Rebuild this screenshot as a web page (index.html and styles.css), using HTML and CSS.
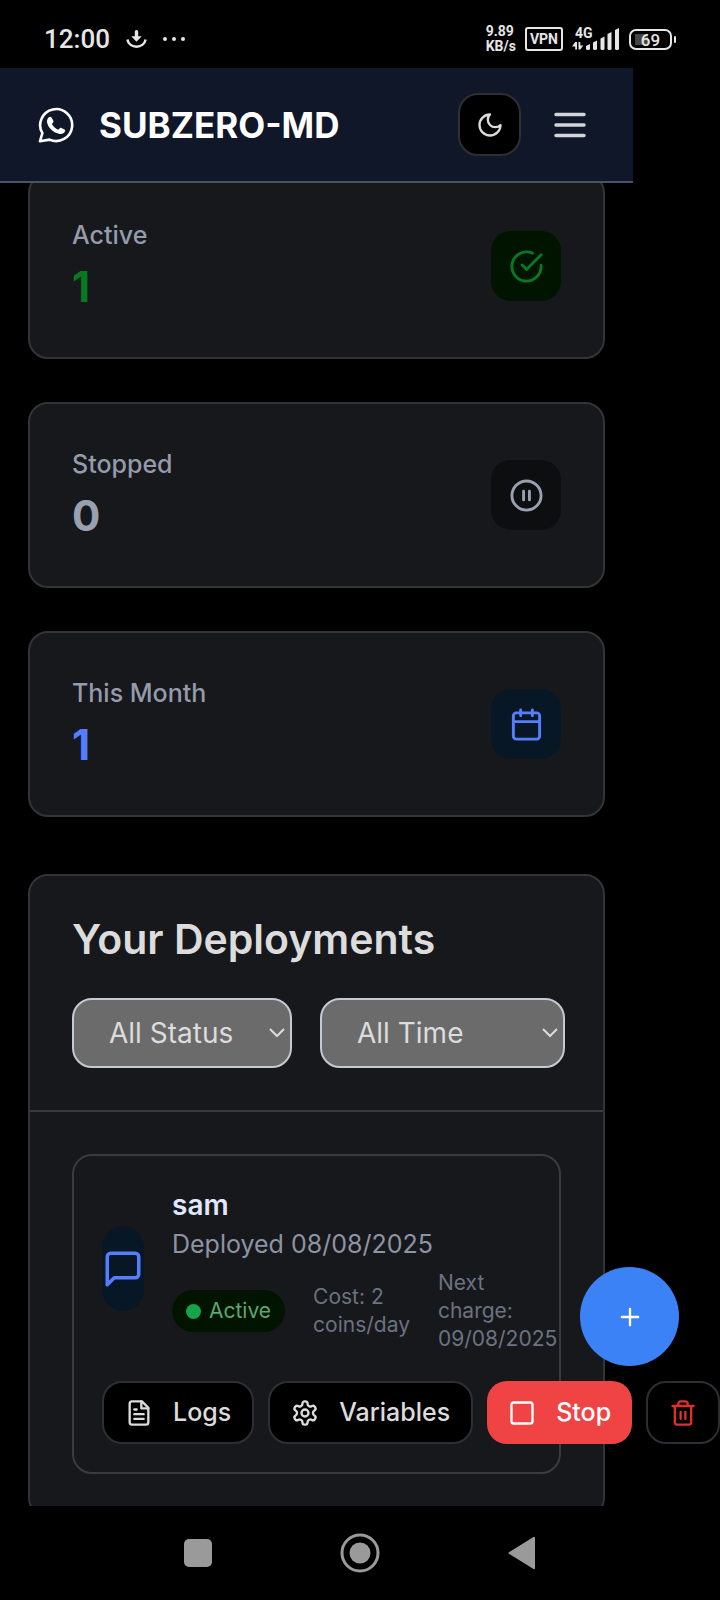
FILE: index.html
```html
<!DOCTYPE html>
<html lang="en">
<head>
<meta charset="utf-8">
<meta name="viewport" content="width=device-width, initial-scale=1">
<title>SUBZERO-MD</title>
<link rel="stylesheet" href="styles.css">
</head>
<body>
<div class="screen">
  <div class="status-bar">
    <div class="status-left">
      <span class="clock">12:00</span>
      <svg class="download" viewBox="0 0 22 20" aria-hidden="true"><path d="M9.200 2.500a1.800 1.800 0 0 1 3.600 0V7h3.700L11 13 5.500 7h3.700z" fill="currentColor"/><path d="M1.500 10.500c1.500 10 17.500 10 19 0" fill="none" stroke="currentColor" stroke-width="2.600"/></svg>
      <svg class="dots" viewBox="0 0 22 6" fill="currentColor" aria-hidden="true"><circle cx="2" cy="3" r="2"/><circle cx="11" cy="3" r="2"/><circle cx="20" cy="3" r="2"/></svg>
    </div>
    <div class="status-right">
      <span class="net-speed">9.89<br>KB/s</span>
      <span class="vpn">VPN</span>
      <span class="signal">
        <span class="signal-label">4G</span>
        <svg class="signal-bars" viewBox="0 0 48 24" fill="currentColor" aria-hidden="true"><path d="M0 19.500 3.200 15H5v7.500H3.200v-3zM6.500 15h1.800v3.500h3L8.300 22.500H6.500z"/><path d="M14 19l4-2v4.500q0 1.500-1.500 1.500h-1q-1.500 0-1.500-1.500z"/><path d="M21 15.500l4-2v8q0 1.500-1.500 1.500h-1q-1.500 0-1.500-1.500z"/><path d="M28.500 11.500l4-2v12q0 1.500-1.500 1.500h-1q-1.500 0-1.500-1.500z"/><path d="M35.500 7l4-2v16.500q0 1.500-1.500 1.500h-1q-1.500 0-1.500-1.500z"/><path d="M43 3l4-2v20.500q0 1.500-1.500 1.500h-1q-1.500 0-1.500-1.500z"/></svg>
      </span>
      <span class="battery"><span class="battery-level">69</span></span>
    </div>
  </div>

  <header class="app-header">
    <a class="brand" href="#">
      <svg class="brand-icon" viewBox="0 0 36 36" aria-hidden="true"><path d="M2 34.200 4.400 26.200A16 16 0 1 1 11.500 32.600Z" fill="none" stroke="currentColor" stroke-width="2.600" stroke-linejoin="round"/><path d="M10.300 10.800c1-1.200 2.600-1.300 3.300-.2l1.700 3.200c.4.800.2 1.400-.4 2l-1 1.100c1.600 2.800 3.600 4.600 6.400 5.800l1.500-1.500c.5-.5 1-.5 1.600-.3l3 1.500c.8.400.9 1 .6 1.800-.8 2-3 3-5.200 2.700-6.600-1-11.500-6-12.700-11.400-.4-1.800.2-3.500 1.200-4.700z" fill="currentColor"/></svg>
      <span>SUBZERO-MD</span>
    </a>
    <div class="header-actions">
      <button class="btn btn-icon" type="button" aria-label="Toggle theme">
        <svg class="icon" viewBox="0 0 24 24"><path d="M12 3a6 6 0 0 0 9 9 9 9 0 1 1-9-9Z"/></svg>
      </button>
      <button class="menu-button" type="button" aria-label="Open menu">
        <svg class="icon icon-lg" viewBox="0 0 24 24"><path d="M4 6h16M4 12h16M4 18h16"/></svg>
      </button>
    </div>
  </header>

  <div class="viewport">
    <main class="content">
      <section class="stats">
        <article class="card stat stat-green">
          <div><p class="stat-label">Active</p><p class="stat-value">1</p></div>
          <span class="stat-icon"><svg class="icon icon-md" viewBox="0 0 24 24"><path d="M22 11.080V12a10 10 0 1 1-5.930-9.140"/><path d="M22 4 12 14.010l-3-3"/></svg></span>
        </article>
        <article class="card stat stat-gray">
          <div><p class="stat-label">Stopped</p><p class="stat-value">0</p></div>
          <span class="stat-icon"><svg class="icon icon-md" viewBox="0 0 24 24"><circle cx="12" cy="12" r="10"/><path d="M10 15V9M14 15V9"/></svg></span>
        </article>
        <article class="card stat stat-blue">
          <div><p class="stat-label">This Month</p><p class="stat-value">1</p></div>
          <span class="stat-icon"><svg class="icon icon-md" viewBox="0 0 24 24"><rect x="3" y="4" width="18" height="18" rx="2"/><path d="M16 2v4M8 2v4M3 10h18"/></svg></span>
        </article>
      </section>

      <section class="card deployments">
        <div class="deployments-head">
          <h2>Your Deployments</h2>
          <div class="filters">
            <div class="select-wrap">
              <select class="select select-status" aria-label="Status filter"><option>All Status</option><option>Active</option><option>Stopped</option></select>
              <svg class="chevron" viewBox="0 0 16 10" aria-hidden="true"><path d="m1 1 7 7 7-7"/></svg>
            </div>
            <div class="select-wrap">
              <select class="select select-time" aria-label="Time filter"><option>All Time</option><option>This Month</option></select>
              <svg class="chevron" viewBox="0 0 16 10" aria-hidden="true"><path d="m1 1 7 7 7-7"/></svg>
            </div>
          </div>
        </div>
        <div class="deployments-body">
          <article class="deployment">
            <div class="deployment-info">
              <span class="deployment-icon"><svg class="icon icon-lg" viewBox="0 0 24 24"><path d="M21 15a2 2 0 0 1-2 2H7l-4 4V5a2 2 0 0 1 2-2h14a2 2 0 0 1 2 2z"/></svg></span>
              <div class="deployment-text">
                <h3>sam</h3>
                <p class="deployed">Deployed 08/08/2025</p>
                <div class="meta">
                  <span class="badge">Active</span>
                  <span>Cost: 2 coins/day</span>
                  <span>Next charge: 09/08/2025</span>
                </div>
              </div>
            </div>
            <div class="actions">
              <button class="btn" type="button"><svg class="icon" viewBox="0 0 24 24"><path d="M14.500 2H6a2 2 0 0 0-2 2v16a2 2 0 0 0 2 2h12a2 2 0 0 0 2-2V7.500L14.500 2z"/><path d="M14 2v6h6M16 13H8M16 17H8M10 9H8"/></svg>Logs</button>
              <button class="btn" type="button"><svg class="icon" viewBox="0 0 24 24"><path d="M12.220 2h-.44a2 2 0 0 0-2 2v.18a2 2 0 0 1-1 1.730l-.43.25a2 2 0 0 1-2 0l-.15-.08a2 2 0 0 0-2.730.73l-.22.38a2 2 0 0 0 .73 2.730l.15.1a2 2 0 0 1 1 1.720v.51a2 2 0 0 1-1 1.740l-.15.09a2 2 0 0 0-.73 2.730l.22.38a2 2 0 0 0 2.730.73l.15-.08a2 2 0 0 1 2 0l.43.25a2 2 0 0 1 1 1.730V20a2 2 0 0 0 2 2h.44a2 2 0 0 0 2-2v-.18a2 2 0 0 1 1-1.730l.43-.25a2 2 0 0 1 2 0l.15.08a2 2 0 0 0 2.730-.73l.22-.39a2 2 0 0 0-.73-2.730l-.15-.08a2 2 0 0 1-1-1.740v-.5a2 2 0 0 1 1-1.740l.15-.09a2 2 0 0 0 .73-2.730l-.22-.38a2 2 0 0 0-2.730-.73l-.15.08a2 2 0 0 1-2 0l-.43-.25a2 2 0 0 1-1-1.730V4a2 2 0 0 0-2-2z"/><circle cx="12" cy="12" r="3"/></svg>Variables</button>
              <button class="btn btn-danger" type="button"><svg class="icon" viewBox="0 0 24 24"><rect x="3" y="3" width="18" height="18" rx="2"/></svg>Stop</button>
              <button class="btn btn-delete" type="button" aria-label="Delete"><svg class="icon" viewBox="0 0 24 24"><path d="M3 6h18M19 6v14a2 2 0 0 1-2 2H7a2 2 0 0 1-2-2V6M8 6V4a2 2 0 0 1 2-2h4a2 2 0 0 1 2 2v2M10 11v6M14 11v6"/></svg></button>
            </div>
          </article>
        </div>
      </section>
    </main>
    <button class="fab" type="button" aria-label="New deployment"><svg class="icon" viewBox="0 0 24 24"><path d="M5 12h14M12 5v14"/></svg></button>
  </div>

  <nav class="nav-bar" aria-label="System">
    <button type="button" aria-label="Recents"><svg viewBox="0 0 40 40"><rect x="6" y="6" width="28" height="28" rx="5"/></svg></button>
    <button type="button" aria-label="Home"><svg viewBox="0 0 40 40"><circle cx="20" cy="20" r="10.500"/><circle cx="20" cy="20" r="18" fill="none" stroke="currentColor" stroke-width="3"/></svg></button>
    <button type="button" aria-label="Back"><svg viewBox="0 0 40 40"><path d="M7.500 20 32 4.800v30.400z" stroke="currentColor" stroke-width="2" stroke-linejoin="round"/></svg></button>
  </nav>
</div>
</body>
</html>
```
FILE: styles.css
```css
*, *::before, *::after { box-sizing: border-box; }

body {
  margin: 0;
  background: #000;
  color: #dcdcdc;
  font-family: Inter, "Liberation Sans", sans-serif;
  font-size: 28px;
  line-height: 42px;
}

h2, h3, p { margin: 0; }

button, select { font: inherit; color: inherit; margin: 0; }

button { cursor: pointer; }

svg { display: block; flex: none; }

.screen {
  display: flex;
  flex-direction: column;
  height: 100vh;
  overflow: hidden;
}

.icon {
  width: 28px;
  height: 28px;
  fill: none;
  stroke: currentColor;
  stroke-width: 2;
  stroke-linecap: round;
  stroke-linejoin: round;
}
.icon-md { width: 35px; height: 35px; }
.icon-lg { width: 42px; height: 42px; }

/* System status bar */
.status-bar {
  display: flex;
  flex: none;
  justify-content: space-between;
  align-items: center;
  height: 68px;
  padding: 10px 48px 0 44px;
  color: #e6e6e6;
  font-family: Roboto, sans-serif;
}
.status-left { display: flex; align-items: center; gap: 16px; }
.clock { font-size: 26px; line-height: 32px; font-weight: 500; }
.download { width: 21px; height: 20px; }
.dots { width: 22px; height: 6px; }
.status-right { display: flex; align-items: center; gap: 9px; }
.net-speed {
  font-size: 14px;
  line-height: 15px;
  font-weight: 700;
}
.vpn {
  padding: 0 3px;
  border: 2px solid;
  border-radius: 3px;
  font-size: 14px;
  line-height: 20px;
  font-weight: 700;
}
.signal { position: relative; }
.signal-label {
  position: absolute;
  top: -1px;
  left: 3px;
  font-size: 14px;
  line-height: 14px;
  font-weight: 700;
}
.signal-bars { width: 48px; height: 24px; }
.battery {
  position: relative;
  width: 43px;
  height: 21px;
  border: 2px solid;
  border-radius: 7px;
  text-align: center;
  background: linear-gradient(90deg, #444 45%, transparent 45%) no-repeat 4px 3px / 30px 11px;
}
.battery::after {
  content: "";
  position: absolute;
  top: 5px;
  right: -6px;
  width: 2px;
  height: 7px;
  border-radius: 1px;
  background: currentColor;
}
.battery-level {
  display: block;
  font-size: 17px;
  line-height: 18px;
  font-weight: 500;
}

/* App header */
.app-header {
  display: flex;
  flex: none;
  position: relative;
  z-index: 1;
  justify-content: space-between;
  align-items: center;
  height: 115px;
  margin-right: 87px;
  padding: 0 28px 0 38px;
  border-bottom: 2px solid #4a5365;
  background: #101729;
}
.brand {
  display: flex;
  align-items: center;
  gap: 25px;
  color: #fff;
  font-size: 35px;
  line-height: 40px;
  font-weight: 700;
  text-decoration: none;
}
.brand-icon { width: 36px; height: 36px; }
.header-actions { display: flex; align-items: center; gap: 14px; }
.menu-button {
  padding: 14px;
  border: 0;
  background: none;
  color: #d1d5db;
}

/* Buttons */
.btn {
  display: inline-flex;
  flex: none;
  align-items: center;
  gap: 20px;
  height: 63px;
  padding: 0 21px;
  border: 2px solid #2e2f33;
  border-radius: 20px;
  background: #000;
  font-size: 25px;
  line-height: 35px;
  font-weight: 500;
}
.btn-icon { justify-content: center; width: 63px; padding: 0; }
.btn-danger { border: 0; background: #f04444; color: #fff; }
.btn-delete { color: #dc3030; }

/* Scrolling page */
.viewport {
  display: flex;
  position: relative;
  flex: 1;
  min-height: 0;
  margin-top: -10px;
}
.content {
  flex: 1;
  min-width: 0;
  overflow: hidden;
  padding: 0 115px 0 28px;
}
.card {
  border: 2px solid #333438;
  border-radius: 20px;
  background: #17181c;
}
.stats {
  display: grid;
  gap: 43px;
  margin-bottom: 57px;
}
.stat {
  display: flex;
  justify-content: space-between;
  align-items: center;
  padding: 41px 42px;
}
.stat-label {
  margin-bottom: 3px;
  color: #949bab;
  font-size: 25px;
  line-height: 39px;
  font-weight: 500;
}
.stat-value {
  font-size: 42px;
  line-height: 58px;
  font-weight: 700;
}
.stat-icon {
  display: grid;
  place-items: center;
  width: 70px;
  height: 70px;
  border-radius: 20px;
}
.stat-green { color: #087823; }
.stat-green .stat-icon { background: #001400; }
.stat-gray { color: #99a0b0; }
.stat-gray .stat-icon { background: #0d0e10; }
.stat-blue { color: #557eff; }
.stat-blue .stat-icon { background: #081725; }

/* Deployments */
.deployments-head {
  padding: 42px;
  border-bottom: 2px solid #3a3b3e;
}
.deployments-head h2 {
  margin-bottom: 38px;
  font-size: 41px;
  line-height: 42px;
  font-weight: 600;
  white-space: nowrap;
}
.filters { display: flex; gap: 28px; }
.select-wrap { position: relative; flex: none; }
.select {
  appearance: none;
  display: block;
  height: 70px;
  padding: 0 35px;
  border: 2px solid #c5c9d1;
  border-radius: 20px;
  background: #6b6b6b;
}
.select-status { width: 220px; }
.select-time { width: 245px; }
.chevron {
  position: absolute;
  top: 30px;
  right: 7px;
  width: 16px;
  height: 10px;
  fill: none;
  stroke: currentColor;
  stroke-width: 2;
  pointer-events: none;
}
.deployments-body { padding: 42px; }
.deployment {
  padding: 28px;
  border: 2px solid #3a3b3e;
  border-radius: 20px;
}
.deployment-info {
  display: flex;
  align-items: center;
  gap: 28px;
  margin-bottom: 28px;
}
.deployment-icon {
  display: grid;
  flex: none;
  place-items: center;
  width: 42px;
  height: 85px;
  border-radius: 21px;
  background: #081725;
  color: #557eff;
}
.deployment-text { flex: 1; min-width: 0; }
.deployment-text h3 {
  color: #e0e7ff;
  font-size: 28px;
  line-height: 42px;
  font-weight: 600;
}
.deployed {
  margin-bottom: 6px;
  color: #8d94a3;
  font-size: 25px;
  line-height: 37px;
}
.meta {
  display: flex;
  align-items: center;
  gap: 28px;
  color: #6b7280;
  font-size: 21px;
  line-height: 28px;
}
.badge {
  display: inline-flex;
  align-items: center;
  gap: 8px;
  padding: 7px 14px;
  border-radius: 21px;
  background: #001400;
  color: #5ca870;
}
.badge::before {
  content: "";
  width: 15px;
  height: 15px;
  border-radius: 50%;
  background: #16a34a;
}
.actions { display: flex; gap: 14px; }

.fab {
  display: grid;
  position: absolute;
  right: 41px;
  bottom: 140px;
  place-items: center;
  width: 99px;
  height: 99px;
  padding: 0;
  border: 0;
  border-radius: 50%;
  background: #3b82f6;
  color: #fff;
}

/* System navigation */
.nav-bar {
  display: flex;
  flex: none;
  position: relative;
  justify-content: center;
  align-items: center;
  height: 94px;
  background: #000;
}
.nav-bar button {
  display: grid;
  place-items: center;
  width: 162px;
  height: 60px;
  padding: 0;
  border: 0;
  background: none;
  color: #9a9a9a;
}
.nav-bar svg { width: 40px; height: 40px; fill: currentColor; }
```
